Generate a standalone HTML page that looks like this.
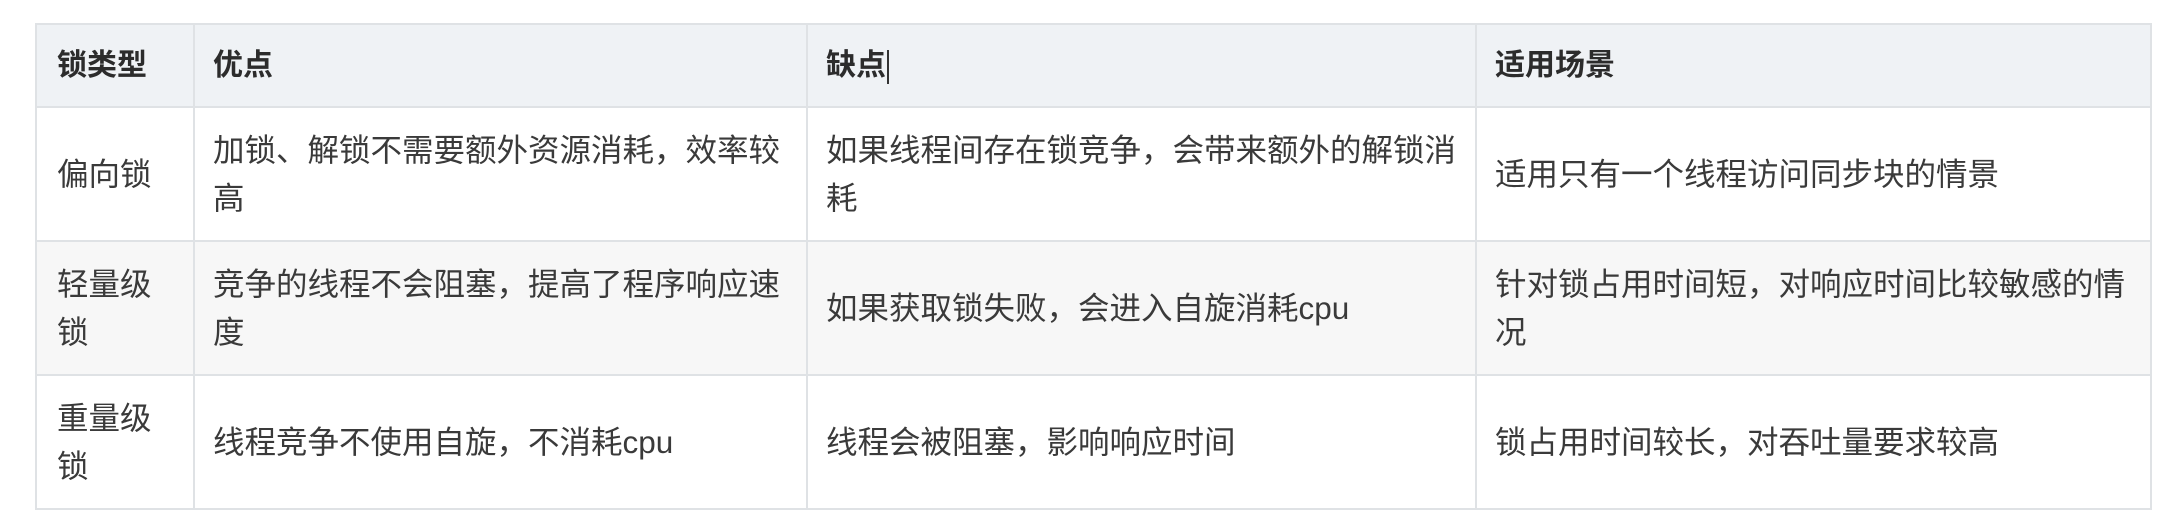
<!DOCTYPE html>
<html><head><meta charset="utf-8"><style>
html,body{margin:0;padding:0;background:#fff;width:2178px;height:524px;overflow:hidden}
table{position:absolute;left:35px;top:23px;border-collapse:collapse;width:2115px;table-layout:fixed;
font-family:"Liberation Sans","Noto Sans CJK SC",sans-serif;font-size:31.5px;line-height:48px;color:#3a3a3a}
td,th{border:2px solid #dfe2e5;padding:0 18px;text-align:left;vertical-align:middle}
th{background:#eff2f5;font-weight:bold;height:81px;color:#2c2c2c;font-size:30px}
tr.r{height:134px}
tr.g{background:#f7f7f7}
.cur{display:inline-block;width:2px;height:34px;background:#333;vertical-align:middle;margin-left:1px}
</style></head><body>
<table>
<colgroup><col style="width:158px"><col style="width:613px"><col style="width:669px"><col style="width:675px"></colgroup>
<tr><th style="padding-left:20px">锁类型</th><th>优点</th><th>缺点<span class="cur"></span></th><th>适用场景</th></tr>
<tr class="r"><td style="padding-left:20px">偏向锁</td><td>加锁、解锁不需要额外资源消耗，效率较高</td><td>如果线程间存在锁竞争，会带来额外的解锁消耗</td><td>适用只有一个线程访问同步块的情景</td></tr>
<tr class="r g"><td style="padding-left:20px">轻量级锁</td><td>竞争的线程不会阻塞，提高了程序响应速度</td><td>如果获取锁失败，会进入自旋消耗cpu</td><td>针对锁占用时间短，对响应时间比较敏感的情况</td></tr>
<tr class="r"><td style="padding-left:20px">重量级锁</td><td>线程竞争不使用自旋，不消耗cpu</td><td>线程会被阻塞，影响响应时间</td><td>锁占用时间较长，对吞吐量要求较高</td></tr>
</table>
</body></html>
